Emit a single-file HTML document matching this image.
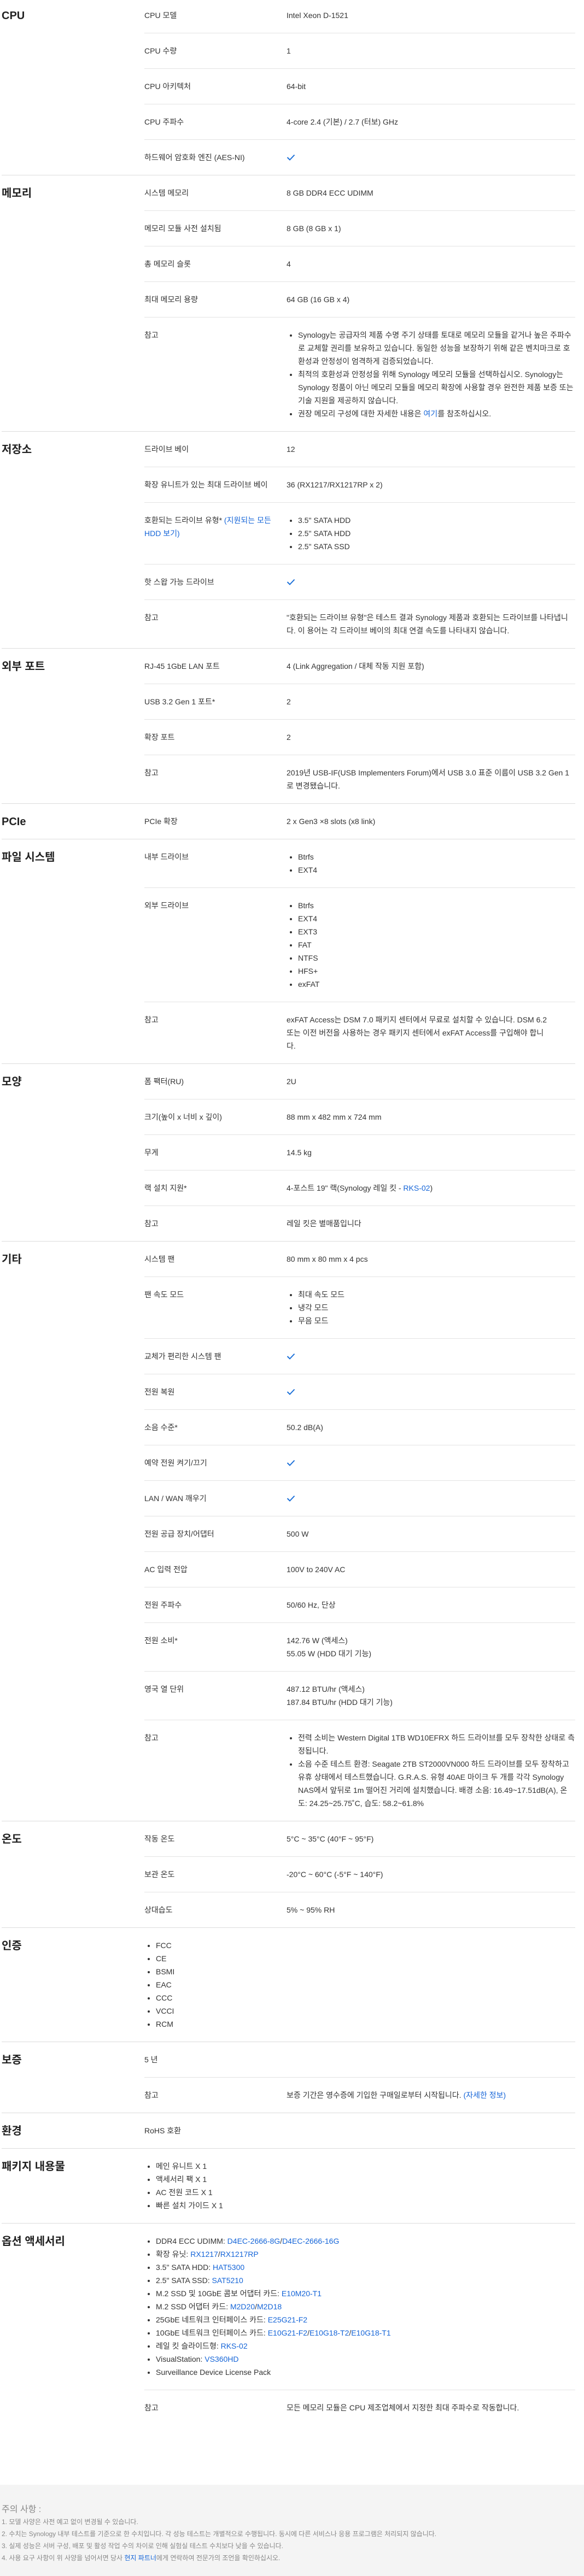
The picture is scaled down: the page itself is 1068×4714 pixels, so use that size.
<!DOCTYPE html>
<html lang="ko"><head><meta charset="utf-8">
<style>
html,body{margin:0;padding:0;background:#fff}
body{width:1068px;height:4714px;overflow:hidden;position:relative;font-family:"Liberation Sans","Noto Sans CJK KR",sans-serif;font-size:14px;line-height:24px;color:#333}
.wrap{position:absolute;left:3px;top:-4px;width:1049px}
.sec{display:flex;border-bottom:1px solid #dcdcdc}
.sec.last{border-bottom:none}
.cat{width:261px;flex:none;font-size:20px;font-weight:bold;color:#222;padding-top:20px;line-height:26px}
.rows{flex:1}
.row{display:flex;border-bottom:1px solid #e3e3e3;padding:20px 0}
.row:last-child{border-bottom:none}
.lab{width:240px;flex:none;padding-right:20px}
.val{flex:1}
.full{padding:20px 0}
ul{margin:0;padding-left:21px}
a{color:#1565d8;text-decoration:none}
.ck{display:inline-block;vertical-align:middle;margin-top:-2px}
.nw{white-space:nowrap;display:block}
.foot{position:absolute;left:0;top:4547px;width:1068px;height:167px;background:#f4f4f4;color:#888;font-size:12px;line-height:22px}
.foot .in{padding:35px 0 0 3px}
.foot .h{font-size:16px;color:#888}
</style></head><body>
<div class="wrap">

<div class="sec"><div class="cat">CPU</div><div class="rows">
<div class="row"><div class="lab">CPU 모델</div><div class="val">Intel Xeon D-1521</div></div>
<div class="row"><div class="lab">CPU 수량</div><div class="val">1</div></div>
<div class="row"><div class="lab">CPU 아키텍처</div><div class="val">64-bit</div></div>
<div class="row"><div class="lab">CPU 주파수</div><div class="val">4-core 2.4 (기본) / 2.7 (터보) GHz</div></div>
<div class="row"><div class="lab">하드웨어 암호화 엔진 (AES-NI)</div><div class="val"><svg class="ck" width="16" height="12" viewBox="0 0 16 12"><path d="M1.5 6 L6 10.5 L14.5 1.5" fill="none" stroke="#1a6fd8" stroke-width="2"/></svg></div></div>
</div></div>

<div class="sec"><div class="cat">메모리</div><div class="rows">
<div class="row"><div class="lab">시스템 메모리</div><div class="val">8 GB DDR4 ECC UDIMM</div></div>
<div class="row"><div class="lab">메모리 모듈 사전 설치됨</div><div class="val">8 GB (8 GB x 1)</div></div>
<div class="row"><div class="lab">총 메모리 슬롯</div><div class="val">4</div></div>
<div class="row"><div class="lab">최대 메모리 용량</div><div class="val">64 GB (16 GB x 4)</div></div>
<div class="row"><div class="lab">참고</div><div class="val"><ul>
<li>Synology는 공급자의 제품 수명 주기 상태를 토대로 메모리 모듈을 같거나 높은 주파수로 교체할 권리를 보유하고 있습니다. 동일한 성능을 보장하기 위해 같은 벤치마크로 호환성과 안정성이 엄격하게 검증되었습니다.</li>
<li>최적의 호환성과 안정성을 위해 Synology 메모리 모듈을 선택하십시오. Synology는 Synology 정품이 아닌 메모리 모듈을 메모리 확장에 사용할 경우 완전한 제품 보증 또는 기술 지원을 제공하지 않습니다.</li>
<li>권장 메모리 구성에 대한 자세한 내용은 <a>여기</a>를 참조하십시오.</li></ul></div></div>
</div></div>

<div class="sec"><div class="cat">저장소</div><div class="rows">
<div class="row"><div class="lab">드라이브 베이</div><div class="val">12</div></div>
<div class="row"><div class="lab">확장 유니트가 있는 최대 드라이브 베이</div><div class="val">36 (RX1217/RX1217RP x 2)</div></div>
<div class="row"><div class="lab">호환되는 드라이브 유형* <a>(지원되는 모든 HDD 보기)</a></div><div class="val"><ul><li>3.5" SATA HDD</li><li>2.5" SATA HDD</li><li>2.5" SATA SSD</li></ul></div></div>
<div class="row"><div class="lab">핫 스왑 가능 드라이브</div><div class="val"><svg class="ck" width="16" height="12" viewBox="0 0 16 12"><path d="M1.5 6 L6 10.5 L14.5 1.5" fill="none" stroke="#1a6fd8" stroke-width="2"/></svg></div></div>
<div class="row"><div class="lab">참고</div><div class="val">"호환되는 드라이브 유형"은 테스트 결과 Synology 제품과 호환되는 드라이브를 나타냅니다. 이 용어는 각 드라이브 베이의 최대 연결 속도를 나타내지 않습니다.</div></div>
</div></div>

<div class="sec"><div class="cat">외부 포트</div><div class="rows">
<div class="row"><div class="lab">RJ-45 1GbE LAN 포트</div><div class="val">4 (Link Aggregation / 대체 작동 지원 포함)</div></div>
<div class="row"><div class="lab">USB 3.2 Gen 1 포트*</div><div class="val">2</div></div>
<div class="row"><div class="lab">확장 포트</div><div class="val">2</div></div>
<div class="row"><div class="lab">참고</div><div class="val">2019년 USB-IF(USB Implementers Forum)에서 USB 3.0 표준 이름이 USB 3.2 Gen 1로 변경됐습니다.</div></div>
</div></div>

<div class="sec"><div class="cat">PCIe</div><div class="rows">
<div class="row"><div class="lab">PCIe 확장</div><div class="val">2 x Gen3 ×8 slots (x8 link)</div></div>
</div></div>

<div class="sec"><div class="cat">파일 시스템</div><div class="rows">
<div class="row"><div class="lab">내부 드라이브</div><div class="val"><ul><li>Btrfs</li><li>EXT4</li></ul></div></div>
<div class="row"><div class="lab">외부 드라이브</div><div class="val"><ul><li>Btrfs</li><li>EXT4</li><li>EXT3</li><li>FAT</li><li>NTFS</li><li>HFS+</li><li>exFAT</li></ul></div></div>
<div class="row"><div class="lab">참고</div><div class="val"><span class="nw">exFAT Access는 DSM 7.0 패키지 센터에서 무료로 설치할 수 있습니다. DSM 6.2</span><span class="nw">또는 이전 버전을 사용하는 경우 패키지 센터에서 exFAT Access를 구입해야 합니</span><span class="nw">다.</span></div></div>
</div></div>

<div class="sec"><div class="cat">모양</div><div class="rows">
<div class="row"><div class="lab">폼 팩터(RU)</div><div class="val">2U</div></div>
<div class="row"><div class="lab">크기(높이 x 너비 x 깊이)</div><div class="val">88 mm x 482 mm x 724 mm</div></div>
<div class="row"><div class="lab">무게</div><div class="val">14.5 kg</div></div>
<div class="row"><div class="lab">랙 설치 지원*</div><div class="val">4-포스트 19" 랙(Synology 레일 킷 - <a>RKS-02</a>)</div></div>
<div class="row"><div class="lab">참고</div><div class="val">레일 킷은 별매품입니다</div></div>
</div></div>

<div class="sec"><div class="cat">기타</div><div class="rows">
<div class="row"><div class="lab">시스템 팬</div><div class="val">80 mm x 80 mm x 4 pcs</div></div>
<div class="row"><div class="lab">팬 속도 모드</div><div class="val"><ul><li>최대 속도 모드</li><li>냉각 모드</li><li>무음 모드</li></ul></div></div>
<div class="row"><div class="lab">교체가 편리한 시스템 팬</div><div class="val"><svg class="ck" width="16" height="12" viewBox="0 0 16 12"><path d="M1.5 6 L6 10.5 L14.5 1.5" fill="none" stroke="#1a6fd8" stroke-width="2"/></svg></div></div>
<div class="row"><div class="lab">전원 복원</div><div class="val"><svg class="ck" width="16" height="12" viewBox="0 0 16 12"><path d="M1.5 6 L6 10.5 L14.5 1.5" fill="none" stroke="#1a6fd8" stroke-width="2"/></svg></div></div>
<div class="row"><div class="lab">소음 수준*</div><div class="val">50.2 dB(A)</div></div>
<div class="row"><div class="lab">예약 전원 켜기/끄기</div><div class="val"><svg class="ck" width="16" height="12" viewBox="0 0 16 12"><path d="M1.5 6 L6 10.5 L14.5 1.5" fill="none" stroke="#1a6fd8" stroke-width="2"/></svg></div></div>
<div class="row"><div class="lab">LAN / WAN 깨우기</div><div class="val"><svg class="ck" width="16" height="12" viewBox="0 0 16 12"><path d="M1.5 6 L6 10.5 L14.5 1.5" fill="none" stroke="#1a6fd8" stroke-width="2"/></svg></div></div>
<div class="row"><div class="lab">전원 공급 장치/어댑터</div><div class="val">500 W</div></div>
<div class="row"><div class="lab">AC 입력 전압</div><div class="val">100V to 240V AC</div></div>
<div class="row"><div class="lab">전원 주파수</div><div class="val">50/60 Hz, 단상</div></div>
<div class="row"><div class="lab">전원 소비*</div><div class="val">142.76 W (액세스)<br>55.05 W (HDD 대기 기능)</div></div>
<div class="row"><div class="lab">영국 열 단위</div><div class="val">487.12 BTU/hr (액세스)<br>187.84 BTU/hr (HDD 대기 기능)</div></div>
<div class="row"><div class="lab">참고</div><div class="val"><ul>
<li>전력 소비는 Western Digital 1TB WD10EFRX 하드 드라이브를 모두 장착한 상태로 측정됩니다.</li>
<li>소음 수준 테스트 환경: Seagate 2TB ST2000VN000 하드 드라이브를 모두 장착하고 유휴 상태에서 테스트했습니다. G.R.A.S. 유형 40AE 마이크 두 개를 각각 Synology NAS에서 앞뒤로 1m 떨어진 거리에 설치했습니다. 배경 소음: 16.49~17.51dB(A), 온도: 24.25~25.75˚C, 습도: 58.2~61.8%</li></ul></div></div>
</div></div>

<div class="sec"><div class="cat">온도</div><div class="rows">
<div class="row"><div class="lab">작동 온도</div><div class="val">5°C ~ 35°C (40°F ~ 95°F)</div></div>
<div class="row"><div class="lab">보관 온도</div><div class="val">-20°C ~ 60°C (-5°F ~ 140°F)</div></div>
<div class="row"><div class="lab">상대습도</div><div class="val">5% ~ 95% RH</div></div>
</div></div>

<div class="sec"><div class="cat">인증</div><div class="rows"><div class="full"><ul><li>FCC</li><li>CE</li><li>BSMI</li><li>EAC</li><li>CCC</li><li>VCCI</li><li>RCM</li></ul></div></div></div>

<div class="sec"><div class="cat">보증</div><div class="rows">
<div class="row"><div class="lab">5 년</div><div class="val"></div></div>
<div class="row"><div class="lab">참고</div><div class="val">보증 기간은 영수증에 기입한 구매일로부터 시작됩니다. <a>(자세한 정보)</a></div></div>
</div></div>

<div class="sec"><div class="cat">환경</div><div class="rows"><div class="full">RoHS 호환</div></div></div>

<div class="sec"><div class="cat">패키지 내용물</div><div class="rows"><div class="full"><ul><li>메인 유니트 X 1</li><li>액세서리 팩 X 1</li><li>AC 전원 코드 X 1</li><li>빠른 설치 가이드 X 1</li></ul></div></div></div>

<div class="sec last"><div class="cat">옵션 액세서리</div><div class="rows">
<div class="row"><div class="lab" style="width:auto;flex:1;padding-right:0"><ul>
<li>DDR4 ECC UDIMM: <a>D4EC-2666-8G</a>/<a>D4EC-2666-16G</a></li>
<li>확장 유닛: <a>RX1217</a>/<a>RX1217RP</a></li>
<li>3.5" SATA HDD: <a>HAT5300</a></li>
<li>2.5" SATA SSD: <a>SAT5210</a></li>
<li>M.2 SSD 및 10GbE 콤보 어댑터 카드: <a>E10M20-T1</a></li>
<li>M.2 SSD 어댑터 카드: <a>M2D20</a>/<a>M2D18</a></li>
<li>25GbE 네트워크 인터페이스 카드: <a>E25G21-F2</a></li>
<li>10GbE 네트워크 인터페이스 카드: <a>E10G21-F2</a>/<a>E10G18-T2</a>/<a>E10G18-T1</a></li>
<li>레일 킷 슬라이드형: <a>RKS-02</a></li>
<li>VisualStation: <a>VS360HD</a></li>
<li>Surveillance Device License Pack</li></ul></div></div>
<div class="row"><div class="lab">참고</div><div class="val">모든 메모리 모듈은 CPU 제조업체에서 지정한 최대 주파수로 작동합니다.</div></div>
</div></div>

</div>

<div class="foot"><div class="in">
<div class="h">주의 사항 :</div>
<div>1. 모델 사양은 사전 예고 없이 변경될 수 있습니다.</div>
<div>2. 수치는 Synology 내부 테스트를 기준으로 한 수치입니다. 각 성능 테스트는 개별적으로 수행됩니다. 동시에 다른 서비스나 응용 프로그램은 처리되지 않습니다.</div>
<div>3. 실제 성능은 서버 구성, 배포 및 활성 작업 수의 차이로 인해 실험실 테스트 수치보다 낮을 수 있습니다.</div>
<div>4. 사용 요구 사항이 위 사양을 넘어서면 당사 <a>현지 파트너</a>에게 연락하여 전문가의 조언을 확인하십시오.</div>
</div></div>
</body></html>
